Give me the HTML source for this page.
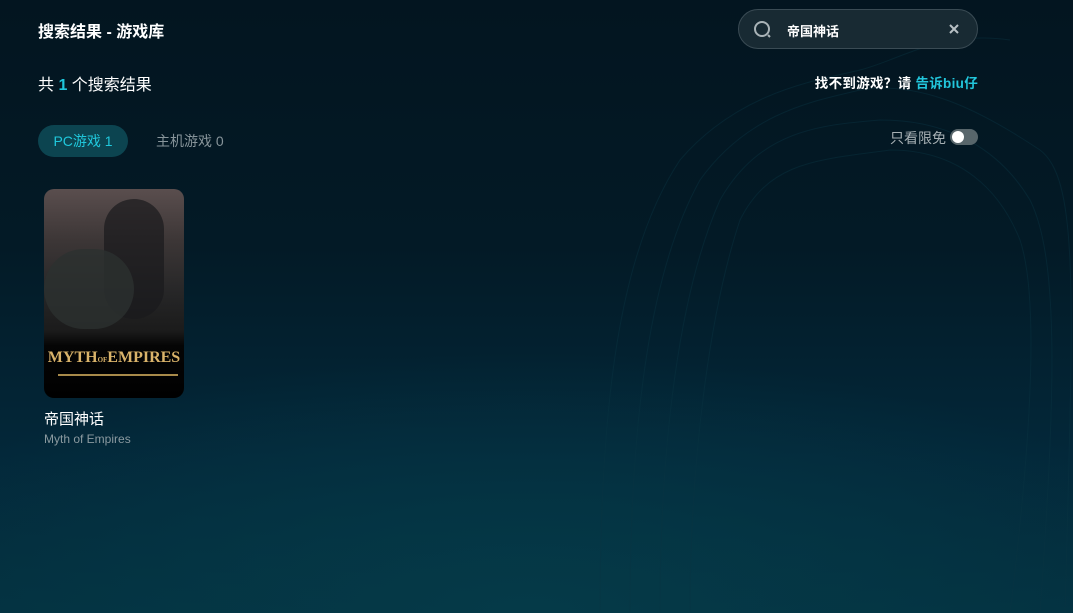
<!DOCTYPE html>
<html><head><meta charset="utf-8"><style>
*{margin:0;padding:0;box-sizing:border-box}
body{width:1073px;height:613px;overflow:hidden;position:relative;font-family:"Liberation Sans","Noto Sans CJK SC",sans-serif;
background:radial-gradient(ellipse 700px 260px at 530px 613px,#053a48 0%,rgba(5,50,64,0) 100%),linear-gradient(180deg,#031520 0%,#031a26 40%,#03283a 75%,#043140 100%);color:#fff}
.a{position:absolute}
.title{left:38px;top:18px;font-size:16px;font-weight:bold}
.count{left:38px;top:71px;font-size:16px}
.count b{color:#1fc6dc}
.tab1{left:38px;top:125px;width:90px;height:32px;border-radius:16px;background:#0c4450;color:#20c8dc;font-size:14px;line-height:32px;text-align:center}
.tab2{left:156px;top:125px;height:32px;line-height:32px;font-size:14px;color:#87949a}
.search{left:738px;top:9px;width:240px;height:40px;border-radius:20px;background:#182a33;border:1px solid #3a4b54}
.search .t{left:48px;top:11px;font-size:13px;font-weight:bold;color:#fff}
.hint{right:95px;top:72px;font-size:13.5px;font-weight:bold;color:#fff;letter-spacing:0.3px}
.hint span{color:#22c6dc}
.free{right:127px;top:128px;font-size:14px;color:#a7b0b4}
.sw{left:950px;top:129px;width:28px;height:16px;border-radius:8px;background:#58666b}
.sw i{position:absolute;left:2px;top:2px;width:12px;height:12px;border-radius:50%;background:#fff}
.card{left:44px;top:189px;width:140px;height:209px;border-radius:10px;overflow:hidden;background:linear-gradient(180deg,#5a4e4e 0%,#3c3636 25%,#262627 50%,#1b1b1b 68%,#050505 75%,#000 100%)}
.logo{left:0;top:160px;width:140px;text-align:center;font-family:"Liberation Serif",serif;color:#d9b36a;font-size:16px;font-weight:bold}
.logo small{font-size:7px}
.bar{left:14px;top:185px;width:120px;height:2px;background:#a88a4a}
.name{left:44px;top:408px;font-size:15px;color:#fff}
.en{left:44px;top:432px;font-size:12px;color:#8b9aa0}
</style></head><body>
<svg class="a" style="left:560px;top:0" width="513" height="613" fill="none" stroke="#0a3442" stroke-width="1" opacity="0.45">
<path d="M40 613 C40 400 60 250 120 160 C180 90 260 80 300 70 C340 60 380 30 450 40"/>
<path d="M70 613 C70 420 90 270 140 180 C190 110 260 100 300 90 C360 80 420 110 480 150 C520 180 513 300 505 613"/>
<path d="M100 613 C100 440 120 290 160 200 C200 130 260 125 320 120 C390 120 440 150 470 200 C500 260 495 400 480 613"/>
<path d="M130 613 C130 460 150 310 180 220 C210 160 260 160 330 150 C400 150 440 190 460 240 C480 300 470 450 450 613"/>
</svg>
<div class="a title">搜索结果 - 游戏库</div>
<div class="a count">共 <b>1</b> 个搜索结果</div>
<div class="a tab1">PC游戏 1</div>
<div class="a tab2">主机游戏 0</div>
<div class="a search">
<svg class="a" style="left:14px;top:10px" width="20" height="20" fill="none" stroke="#a9b3b7" stroke-width="2"><circle cx="9" cy="9" r="7"/><path d="M15 15l2 2"/></svg>
<div class="a t">帝国神话</div>
<svg class="a" style="left:209px;top:13px" width="12" height="12" stroke="#b8c0c4" stroke-width="2"><path d="M2 2l8 8M10 2l-8 8"/></svg>
</div>
<div class="a hint">找不到游戏？请 <span>告诉biu仔</span></div>
<div class="a free">只看限免</div>
<div class="a sw"><i></i></div>
<div class="a card">
<div class="a" style="left:60px;top:10px;width:60px;height:120px;border-radius:30px;background:#1a1a1c;opacity:.7"></div>
<div class="a" style="left:0;top:60px;width:90px;height:80px;border-radius:40px;background:#2c3130;opacity:.8"></div>
<div class="a logo">MYTH<small>OF</small>EMPIRES</div>
<div class="a bar"></div>
</div>
<div class="a name">帝国神话</div>
<div class="a en">Myth of Empires</div>
</body></html>
